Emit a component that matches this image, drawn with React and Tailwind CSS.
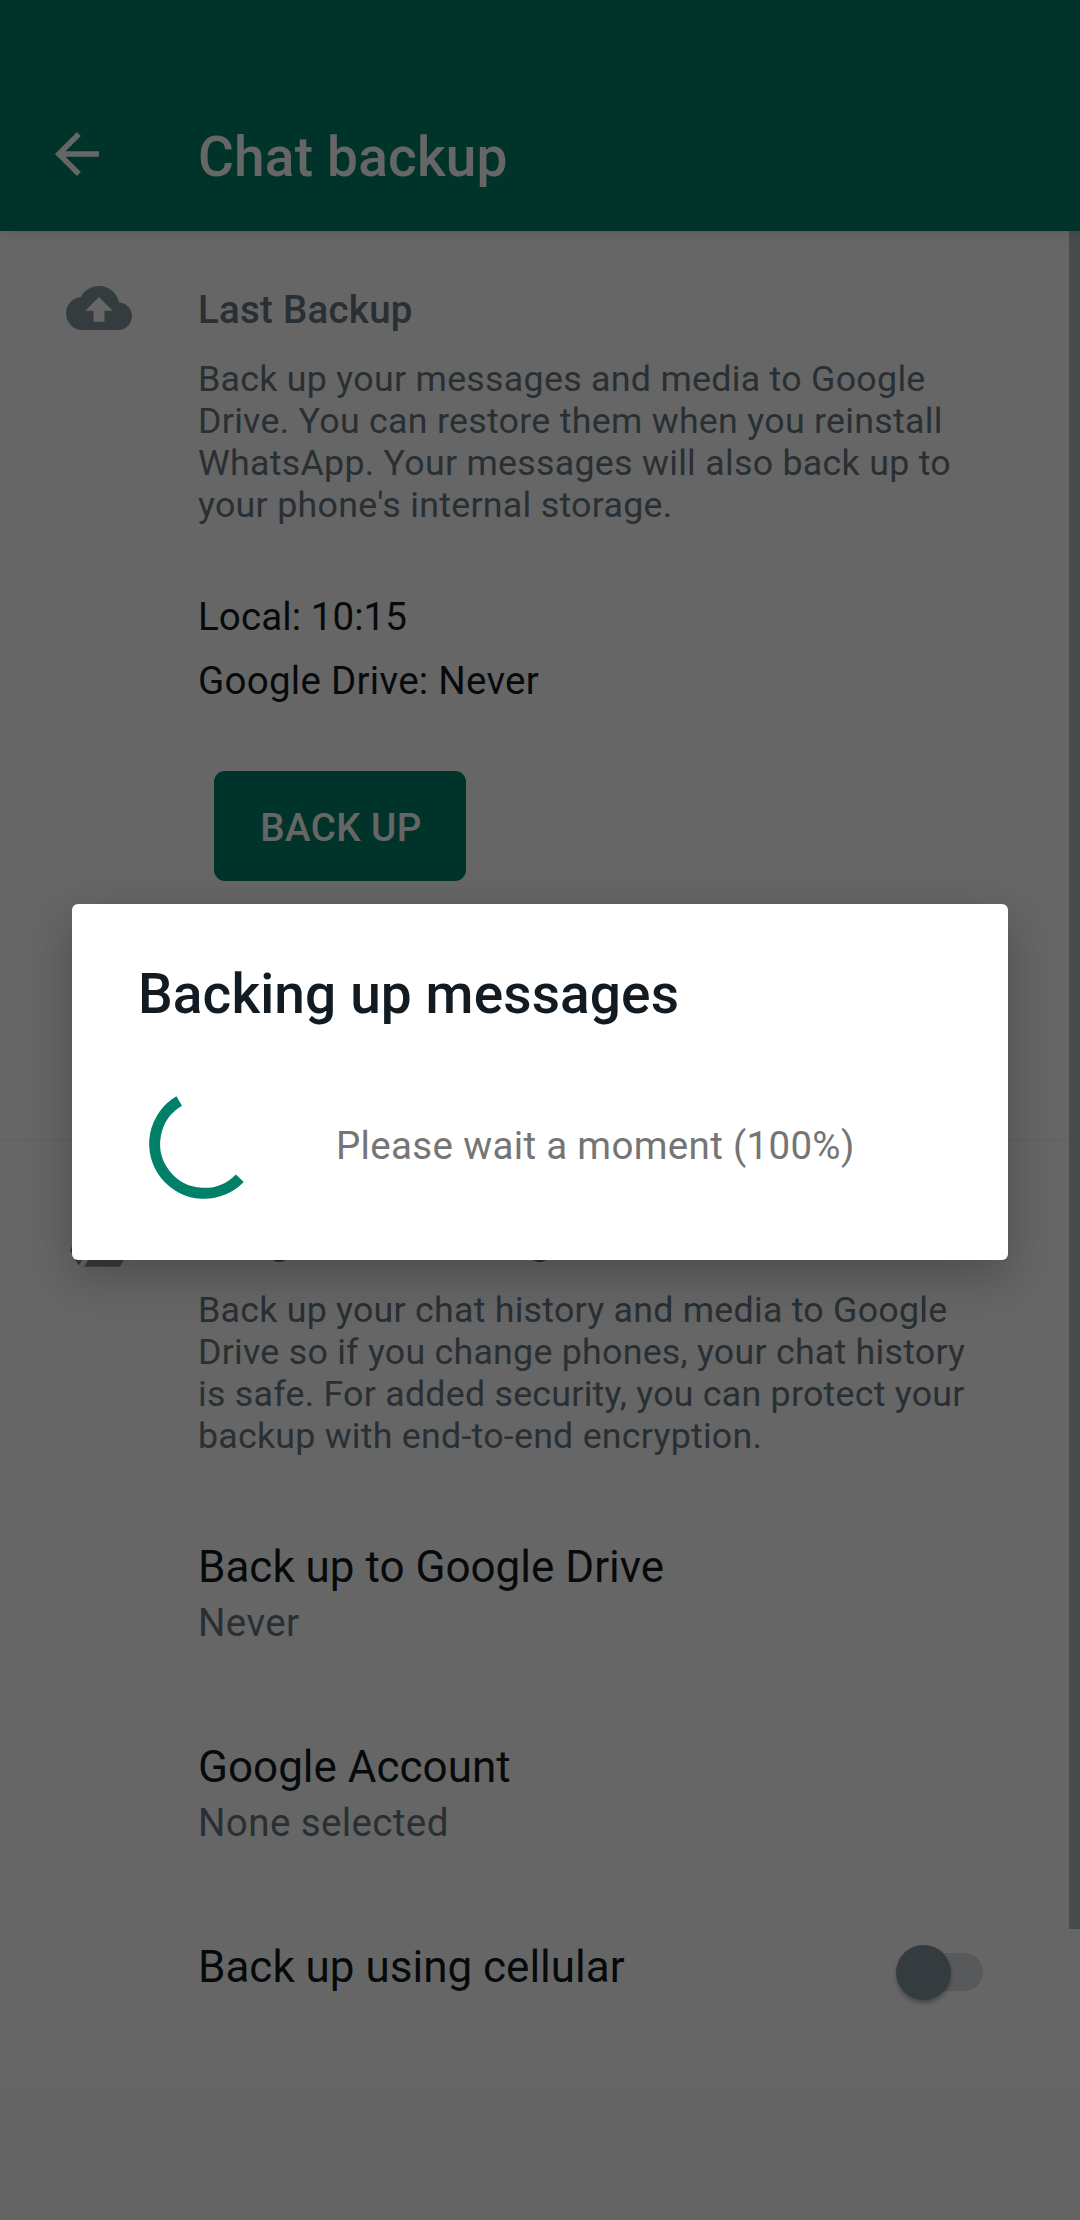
import React from "react";

function ArrowBackIcon() {
  return (
    <svg viewBox="0 0 24 24" className="h-[66px] w-[66px] fill-white">
      <path d="M20 11H7.83l5.59-5.59L12 4l-8 8 8 8 1.41-1.41L7.83 13H20v-2z" />
    </svg>
  );
}

function CloudUploadIcon() {
  return (
    <svg viewBox="0 0 24 24" className="h-[66px] w-[66px] fill-[#8696a0]">
      <path
        fillRule="evenodd"
        d="M19.35 10.04C18.67 6.59 15.64 4 12 4 9.11 4 6.6 5.64 5.35 8.04 2.34 8.36 0 10.91 0 14c0 3.31 2.69 6 6 6h13c2.76 0 5-2.24 5-5 0-2.64-2.05-4.78-4.65-4.96zM14 13v4h-4v-4H7l5-5 5 5h-3z"
      />
    </svg>
  );
}

function DriveIcon() {
  return (
    <svg viewBox="0 0 24 24" className="h-[66px] w-[66px] fill-[#8696a0]">
      <path d="M7.7 3.5 1.4 15l3 5.3h.5L11.1 9.5zM10 15l-3.4 6h13L23 15zM22.3 14 15.4 2H8.6l6.9 12z" />
    </svg>
  );
}

function Spinner() {
  return (
    <svg viewBox="0 0 132 132" className="h-[132px] w-[132px] shrink-0 fill-none">
      <path
        d="M41.2 23.1A49.5 49.5 0 1 0 101.8 100.2"
        stroke="#008069"
        strokeWidth="11"
      />
    </svg>
  );
}

function Section({ icon, className, iconClassName, children }) {
  return (
    <section className={`flex ${className}`}>
      <div className={`w-[198px] shrink-0 pl-[66px] ${iconClassName}`}>{icon}</div>
      <div className="min-w-0 flex-1">{children}</div>
    </section>
  );
}

function Heading({ children }) {
  return (
    <h2 className="text-[38.5px] leading-[46px] font-medium tracking-[0.24px] text-[#667781]">
      {children}
    </h2>
  );
}

function Description({ lines, className }) {
  return (
    <p className={`mt-[25px] text-[35.75px] leading-[42px] whitespace-nowrap text-[#667781] ${className}`}>
      {lines.map((line) => (
        <span key={line} className="block">
          {line}
        </span>
      ))}
    </p>
  );
}

function Setting({ title, value, className }) {
  return (
    <div className={className}>
      <div className="text-[44px] leading-[52px]">{title}</div>
      <div className="mt-[7px] text-[38.5px] leading-[46px] tracking-[0.4px] text-[#667781]">
        {value}
      </div>
    </div>
  );
}

function Toggle() {
  return (
    <div className="mt-[3px] mr-[97px] flex h-[56px] w-[87px] items-center">
      <div className="z-10 h-[55px] w-[55px] shrink-0 rounded-full bg-[#8696a0] shadow-[0_3px_4px_rgba(0,0,0,0.3)]" />
      <div className="-ml-[30px] h-[38px] w-[62px] shrink-0 rounded-r-full bg-[#dcdfe3]" />
    </div>
  );
}

function Dialog() {
  return (
    <div className="absolute inset-0 z-20 flex flex-col bg-black/60 px-[72px] pt-[904px]">
      <div className="h-[356px] rounded-[6px] bg-white px-[66px] pt-[58px] shadow-[0_16px_48px_rgba(0,0,0,0.25)]">
        <h2 className="text-[55px] leading-[64px] font-medium tracking-[0.11px] text-[#111b21]">
          Backing up messages
        </h2>
        <div className="mt-[52px] flex items-center">
          <Spinner />
          <span className="ml-[66px] pt-[4px] text-[38.5px] leading-[46px] tracking-[0.33px] whitespace-nowrap text-[#757575]">
            Please wait a moment (100%)
          </span>
        </div>
      </div>
    </div>
  );
}

export default function App() {
  return (
    <div className="relative flex h-[2220px] w-[1080px] flex-col overflow-hidden bg-[#f7f8fa] font-['Roboto',sans-serif] text-[#111b21]">
      <header className="z-10 flex h-[231px] shrink-0 items-start bg-[#008069] pl-[44px] shadow-[0_2px_10px_rgba(0,0,0,0.12)]">
        <div className="mt-[121px]">
          <ArrowBackIcon />
        </div>
        <h1 className="mt-[125px] ml-[88px] text-[55px] leading-[64px] font-medium tracking-[0.19px] text-white">
          Chat backup
        </h1>
      </header>

      <main className="relative h-[1857px] shrink-0 bg-white">
        <Section
          className="h-[909px] border-b border-[#e9edef] pt-[56px]"
          iconClassName="-mt-[12px]"
          icon={<CloudUploadIcon />}
        >
          <Heading>Last Backup</Heading>
          <Description
            className="tracking-[0.284px]"
            lines={[
              "Back up your messages and media to Google",
              "Drive. You can restore them when you reinstall",
              "WhatsApp. Your messages will also back up to",
              "your phone's internal storage.",
            ]}
          />
          <div className="mt-[68px] text-[38.5px] leading-[46px] tracking-[0.1px]">Local: 10:15</div>
          <div className="mt-[18px] text-[38.5px] leading-[46px] tracking-[0.27px]">
            Google Drive: Never
          </div>
          <button className="mt-[67px] ml-[16px] flex h-[110px] w-[252px] items-center justify-center rounded-[11px] bg-[#008069] pt-[3px] pl-[2px] text-[38.5px] leading-[46px] font-medium tracking-[0.45px] text-white">
            BACK UP
          </button>
        </Section>

        <Section className="pt-[78px]" iconClassName="-mt-[9px]" icon={<DriveIcon />}>
          <Heading>Google Drive settings</Heading>
          <Description
            className="tracking-[0.25px]"
            lines={[
              "Back up your chat history and media to Google",
              "Drive so if you change phones, your chat history",
              "is safe. For added security, you can protect your",
              "backup with end-to-end encryption.",
            ]}
          />
          <Setting className="mt-[84px]" title="Back up to Google Drive" value="Never" />
          <Setting className="mt-[95px]" title="Google Account" value="None selected" />
          <div className="mt-[95px] flex items-start justify-between">
            <div className="text-[44px] leading-[52px]">Back up using cellular</div>
            <Toggle />
          </div>
        </Section>

        <div className="absolute top-0 right-0 h-[1698px] w-[11px] bg-[#b2bcc1]" />
      </main>

      <Dialog />
    </div>
  );
}
